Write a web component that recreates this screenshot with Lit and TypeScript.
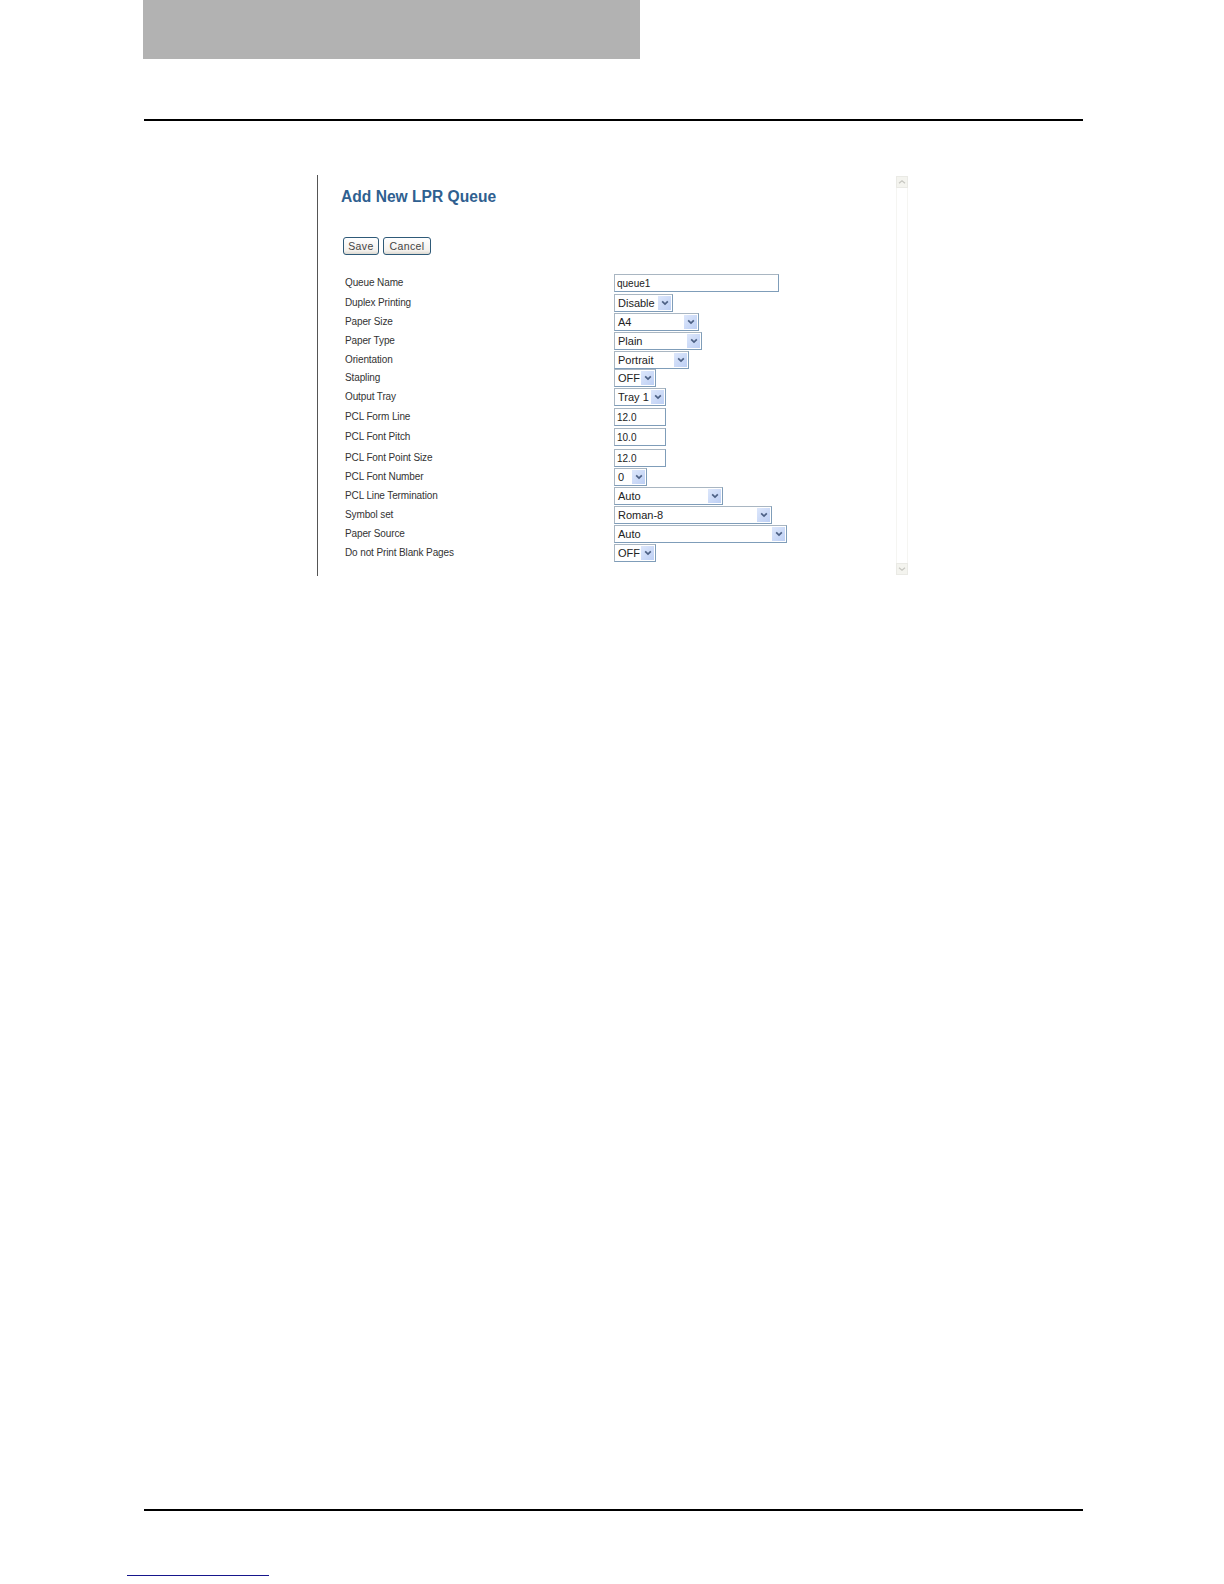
import { LitElement, html, css } from "lit";
import { customElement } from "lit/decorators.js";

type Row = { label: string; value: string; kind: "input" | "select"; right: number; pitch: number };

const rows: Row[] = [
  { label: "Queue Name", value: "queue1", kind: "input", right: 779, pitch: 20 },
  { label: "Duplex Printing", value: "Disable", kind: "select", right: 673, pitch: 19 },
  { label: "Paper Size", value: "A4", kind: "select", right: 699, pitch: 19 },
  { label: "Paper Type", value: "Plain", kind: "select", right: 702, pitch: 19 },
  { label: "Orientation", value: "Portrait", kind: "select", right: 689, pitch: 18 },
  { label: "Stapling", value: "OFF", kind: "select", right: 656, pitch: 19 },
  { label: "Output Tray", value: "Tray 1", kind: "select", right: 666, pitch: 20 },
  { label: "PCL Form Line", value: "12.0", kind: "input", right: 666, pitch: 20 },
  { label: "PCL Font Pitch", value: "10.0", kind: "input", right: 666, pitch: 21 },
  { label: "PCL Font Point Size", value: "12.0", kind: "input", right: 666, pitch: 19 },
  { label: "PCL Font Number", value: "0", kind: "select", right: 647, pitch: 19 },
  { label: "PCL Line Termination", value: "Auto", kind: "select", right: 723, pitch: 19 },
  { label: "Symbol set", value: "Roman-8", kind: "select", right: 772, pitch: 19 },
  { label: "Paper Source", value: "Auto", kind: "select", right: 787, pitch: 19 },
  { label: "Do not Print Blank Pages", value: "OFF", kind: "select", right: 656, pitch: 18 },
];

const chevron = html`<svg viewBox="0 0 9 7" width="8" height="6" aria-hidden="true"><path d="M1.2 1.6 4.5 4.8 7.8 1.6" fill="none" stroke="#4d6185" stroke-width="2"/></svg>`;

@customElement("app-root")
export class AppRoot extends LitElement {
  static styles = css`
    :host {
      display: block;
      width: 1224px;
      height: 1584px;
      background: #fff;
      font-family: "Liberation Sans", Arial, sans-serif;
      color: #333;
      overflow: hidden;
    }
    .header-tab { width: 497px; height: 59px; margin-left: 143px; background: #b2b2b2; }
    .rule { height: 2px; margin-left: 144px; width: 939px; background: #000; }
    .rule.top { margin-top: 60px; }
    .rule.bottom { margin-top: 933px; }
    .shot {
      display: flex;
      margin: 54px 0 0 317px;
      width: 591px;
      height: 401px;
      border-left: 1px solid #555;
      box-sizing: border-box;
    }
    .content { flex: 1; padding: 12px 0 0 23px; min-width: 0; }
    h1 {
      margin: 0;
      font-size: 15.6px;
      line-height: 19px;
      font-weight: 700;
      color: #2f6090;
    }
    .buttons { display: flex; gap: 4px; margin: 31px 0 0 2px; }
    .btn {
      height: 18px;
      box-sizing: border-box;
      border: 1px solid #2f5a78;
      border-radius: 3px;
      background: linear-gradient(#fff, #f3f0ec 80%, #dcd8d0);
      font: 10.5px/16px "Liberation Sans", Arial, sans-serif;
      letter-spacing: 0.4px;
      color: #444;
      padding: 0;
    }
    .btn.save { width: 36px; }
    .btn.cancel { width: 48px; }
    .form { margin-top: 19px; }
    .row { display: flex; align-items: flex-start; }
    .label {
      width: 269px;
      margin-left: 4px;
      font-size: 10px;
      letter-spacing: -0.12px;
      line-height: 18px;
      color: #333;
      white-space: nowrap;
    }
    .field {
      box-sizing: border-box;
      height: 18px;
      border: 1px solid #a9b6c2;
      border-right-color: #7f9db9;
      border-bottom-color: #7f9db9;
      background: #fff;
      font-size: 11px;
      line-height: 16px;
      color: #222;
      white-space: nowrap;
      display: flex;
      align-items: center;
    }
    .field.input { padding-left: 2px; font: 10px/16px "Liberation Sans", Arial, sans-serif; outline: none; }
    .field.select { padding-left: 3px; justify-content: space-between; }
    .arrow {
      width: 13px;
      height: 14px;
      margin-right: 1px;
      flex: none;
      display: flex;
      align-items: center;
      justify-content: center;
      background: linear-gradient(135deg, #dde7fb, #bdcff4);
    }
    .scrollbar {
      width: 12px;
      flex: none;
      margin-left: auto;
      margin: 1px 0 1px auto;
      box-sizing: border-box;
      border: solid #f5f5f2;
      border-width: 0 1px;
      display: flex;
      flex-direction: column;
      justify-content: space-between;
    }
    .sb-btn {
      height: 12px;
      margin: 0 -1px;
      background: #f4f4ef;
      border: 1px solid #eaeae5;
      box-sizing: border-box;
      display: flex;
      align-items: center;
      justify-content: center;
    }
    .link-line { width: 142px; height: 1px; margin: 64px 0 0 127px; background: #16168c; }
  `;

  render() {
    return html`
      <div class="header-tab"></div>
      <div class="rule top"></div>
      <div class="shot">
        <div class="content">
          <h1>Add New LPR Queue</h1>
          <div class="buttons">
            <button class="btn save">Save</button>
            <button class="btn cancel">Cancel</button>
          </div>
          <div class="form">
            ${rows.map(
              (r) => html`
                <div class="row" style="height:${r.pitch}px">
                  <div class="label">${r.label}</div>
                  ${r.kind === "input"
                    ? html`<input class="field input" style="width:${r.right - 614}px" .value=${r.value} />`
                    : html`<div class="field select" style="width:${r.right - 614}px">
                        <span>${r.value}</span><span class="arrow">${chevron}</span>
                      </div>`}
                </div>
              `
            )}
          </div>
        </div>
        <div class="scrollbar">
          <div class="sb-btn">
            <svg viewBox="0 0 9 7" width="8" height="6" aria-hidden="true"><path d="M1 5 4.5 2 8 5" fill="none" stroke="#c6c6c0" stroke-width="1.4"/></svg>
          </div>
          <div class="sb-btn">
            <svg viewBox="0 0 9 7" width="8" height="6" aria-hidden="true"><path d="M1 2 4.5 5 8 2" fill="none" stroke="#c6c6c0" stroke-width="1.4"/></svg>
          </div>
        </div>
      </div>
      <div class="rule bottom"></div>
      <div class="link-line"></div>
    `;
  }
}
